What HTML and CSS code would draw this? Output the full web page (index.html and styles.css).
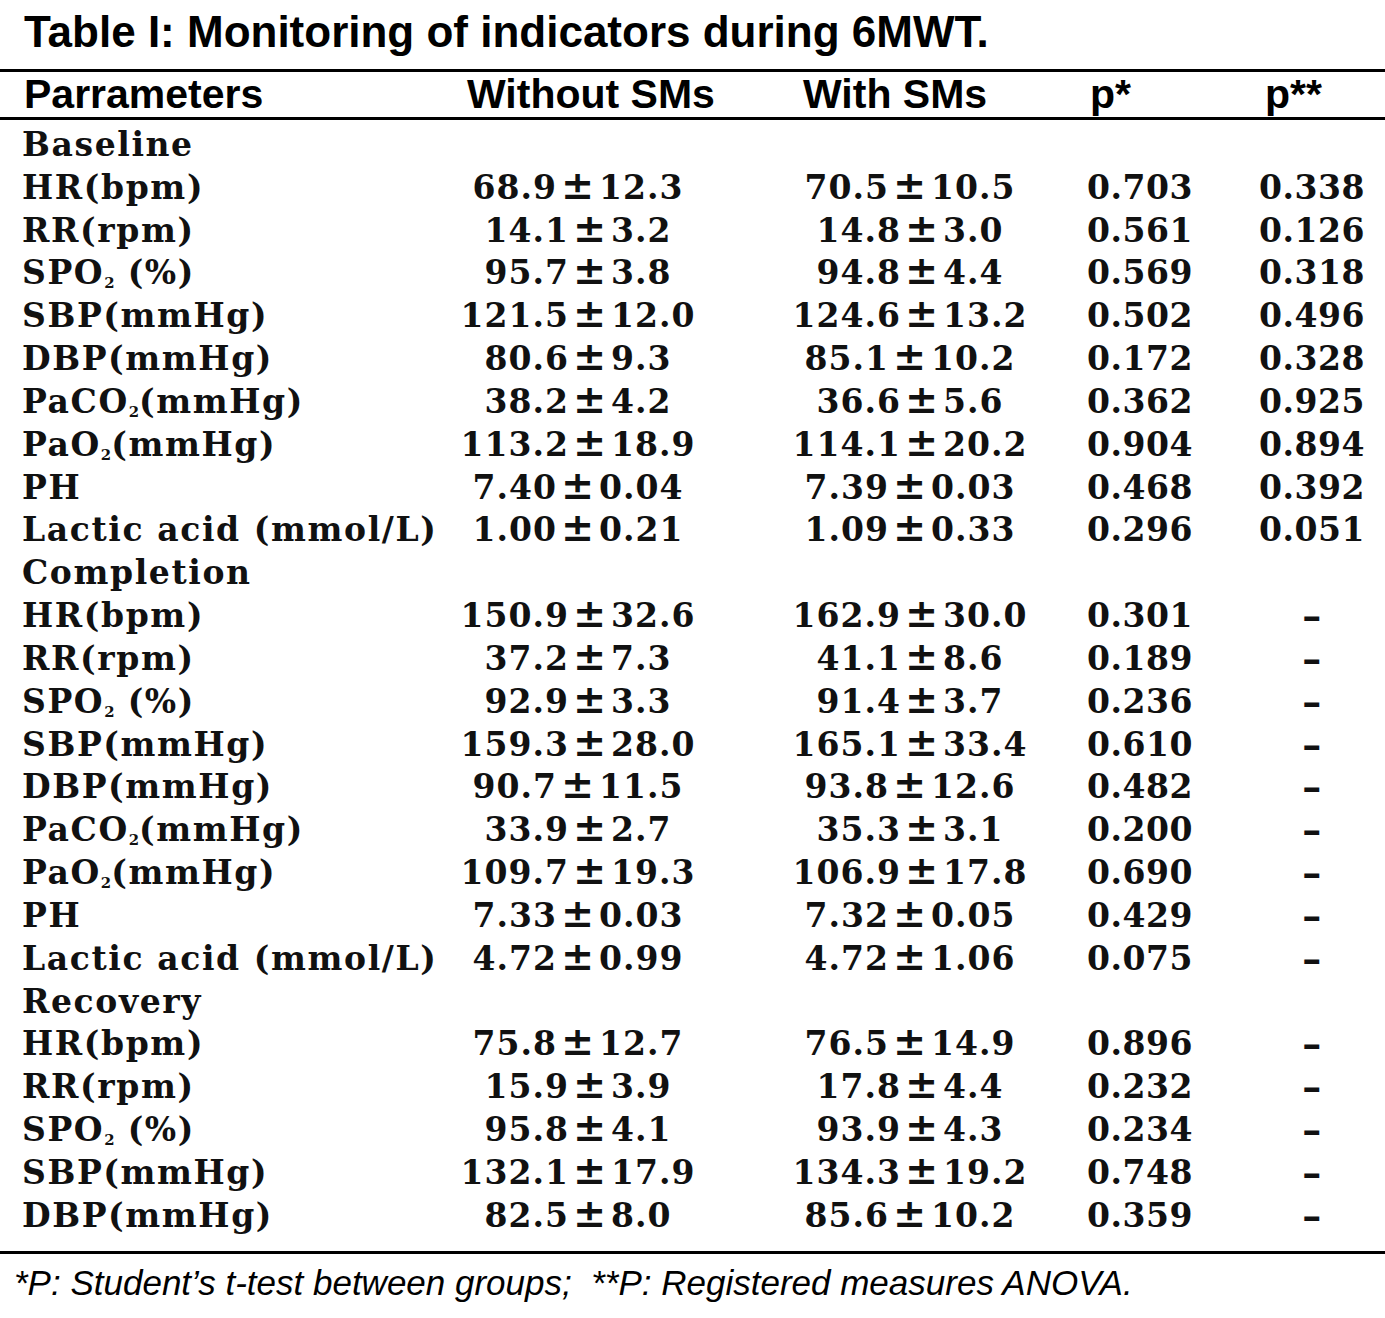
FILE: index.html
```html
<!DOCTYPE html>
<html lang="en">
<head>
<meta charset="utf-8">
<title>Table I</title>
<link rel="stylesheet" href="styles.css">
</head>
<body>
<h1 class="title">Table I: Monitoring of indicators during 6MWT.</h1>
<div class="tbl">
  <div class="row head">
    <div class="c0">Parrameters</div>
    <div class="c1">Without SMs</div>
    <div class="c2">With SMs</div>
    <div class="c3">p*</div>
    <div class="c4">p**</div>
  </div>
  <div class="body">
    <div class="row"><div class="c0">Baseline</div></div>
    <div class="row"><div class="c0">HR(bpm)</div><div class="c1">68.9<span class="pm">±</span>12.3</div><div class="c2">70.5<span class="pm">±</span>10.5</div><div class="c3">0.703</div><div class="c4">0.338</div></div>
    <div class="row"><div class="c0">RR(rpm)</div><div class="c1">14.1<span class="pm">±</span>3.2</div><div class="c2">14.8<span class="pm">±</span>3.0</div><div class="c3">0.561</div><div class="c4">0.126</div></div>
    <div class="row"><div class="c0">SPO<sub>2</sub> (%)</div><div class="c1">95.7<span class="pm">±</span>3.8</div><div class="c2">94.8<span class="pm">±</span>4.4</div><div class="c3">0.569</div><div class="c4">0.318</div></div>
    <div class="row"><div class="c0">SBP(mmHg)</div><div class="c1">121.5<span class="pm">±</span>12.0</div><div class="c2">124.6<span class="pm">±</span>13.2</div><div class="c3">0.502</div><div class="c4">0.496</div></div>
    <div class="row"><div class="c0">DBP(mmHg)</div><div class="c1">80.6<span class="pm">±</span>9.3</div><div class="c2">85.1<span class="pm">±</span>10.2</div><div class="c3">0.172</div><div class="c4">0.328</div></div>
    <div class="row"><div class="c0">PaCO<sub>2</sub>(mmHg)</div><div class="c1">38.2<span class="pm">±</span>4.2</div><div class="c2">36.6<span class="pm">±</span>5.6</div><div class="c3">0.362</div><div class="c4">0.925</div></div>
    <div class="row"><div class="c0">PaO<sub>2</sub>(mmHg)</div><div class="c1">113.2<span class="pm">±</span>18.9</div><div class="c2">114.1<span class="pm">±</span>20.2</div><div class="c3">0.904</div><div class="c4">0.894</div></div>
    <div class="row"><div class="c0">PH</div><div class="c1">7.40<span class="pm">±</span>0.04</div><div class="c2">7.39<span class="pm">±</span>0.03</div><div class="c3">0.468</div><div class="c4">0.392</div></div>
    <div class="row"><div class="c0">Lactic acid (mmol/L)</div><div class="c1">1.00<span class="pm">±</span>0.21</div><div class="c2">1.09<span class="pm">±</span>0.33</div><div class="c3">0.296</div><div class="c4">0.051</div></div>
    <div class="row"><div class="c0">Completion</div></div>
    <div class="row"><div class="c0">HR(bpm)</div><div class="c1">150.9<span class="pm">±</span>32.6</div><div class="c2">162.9<span class="pm">±</span>30.0</div><div class="c3">0.301</div><div class="c4 dash">–</div></div>
    <div class="row"><div class="c0">RR(rpm)</div><div class="c1">37.2<span class="pm">±</span>7.3</div><div class="c2">41.1<span class="pm">±</span>8.6</div><div class="c3">0.189</div><div class="c4 dash">–</div></div>
    <div class="row"><div class="c0">SPO<sub>2</sub> (%)</div><div class="c1">92.9<span class="pm">±</span>3.3</div><div class="c2">91.4<span class="pm">±</span>3.7</div><div class="c3">0.236</div><div class="c4 dash">–</div></div>
    <div class="row"><div class="c0">SBP(mmHg)</div><div class="c1">159.3<span class="pm">±</span>28.0</div><div class="c2">165.1<span class="pm">±</span>33.4</div><div class="c3">0.610</div><div class="c4 dash">–</div></div>
    <div class="row"><div class="c0">DBP(mmHg)</div><div class="c1">90.7<span class="pm">±</span>11.5</div><div class="c2">93.8<span class="pm">±</span>12.6</div><div class="c3">0.482</div><div class="c4 dash">–</div></div>
    <div class="row"><div class="c0">PaCO<sub>2</sub>(mmHg)</div><div class="c1">33.9<span class="pm">±</span>2.7</div><div class="c2">35.3<span class="pm">±</span>3.1</div><div class="c3">0.200</div><div class="c4 dash">–</div></div>
    <div class="row"><div class="c0">PaO<sub>2</sub>(mmHg)</div><div class="c1">109.7<span class="pm">±</span>19.3</div><div class="c2">106.9<span class="pm">±</span>17.8</div><div class="c3">0.690</div><div class="c4 dash">–</div></div>
    <div class="row"><div class="c0">PH</div><div class="c1">7.33<span class="pm">±</span>0.03</div><div class="c2">7.32<span class="pm">±</span>0.05</div><div class="c3">0.429</div><div class="c4 dash">–</div></div>
    <div class="row"><div class="c0">Lactic acid (mmol/L)</div><div class="c1">4.72<span class="pm">±</span>0.99</div><div class="c2">4.72<span class="pm">±</span>1.06</div><div class="c3">0.075</div><div class="c4 dash">–</div></div>
    <div class="row"><div class="c0">Recovery</div></div>
    <div class="row"><div class="c0">HR(bpm)</div><div class="c1">75.8<span class="pm">±</span>12.7</div><div class="c2">76.5<span class="pm">±</span>14.9</div><div class="c3">0.896</div><div class="c4 dash">–</div></div>
    <div class="row"><div class="c0">RR(rpm)</div><div class="c1">15.9<span class="pm">±</span>3.9</div><div class="c2">17.8<span class="pm">±</span>4.4</div><div class="c3">0.232</div><div class="c4 dash">–</div></div>
    <div class="row"><div class="c0">SPO<sub>2</sub> (%)</div><div class="c1">95.8<span class="pm">±</span>4.1</div><div class="c2">93.9<span class="pm">±</span>4.3</div><div class="c3">0.234</div><div class="c4 dash">–</div></div>
    <div class="row"><div class="c0">SBP(mmHg)</div><div class="c1">132.1<span class="pm">±</span>17.9</div><div class="c2">134.3<span class="pm">±</span>19.2</div><div class="c3">0.748</div><div class="c4 dash">–</div></div>
    <div class="row"><div class="c0">DBP(mmHg)</div><div class="c1">82.5<span class="pm">±</span>8.0</div><div class="c2">85.6<span class="pm">±</span>10.2</div><div class="c3">0.359</div><div class="c4 dash">–</div></div>
  </div>
</div>
<p class="note">*P: Student’s t-test between groups;&nbsp; **P: Registered measures ANOVA.</p>
</body>
</html>
```
FILE: styles.css
```css
html, body {
  margin: 0;
  padding: 0;
  background: #fff;
  color: #000;
}

body {
  width: 1385px;
}

.title {
  margin: 0;
  padding: 7px 0 0 24px;
  font-family: "Liberation Sans", Arial, sans-serif;
  font-weight: bold;
  font-size: 44px;
  line-height: 50px;
  color: #000;
}

.tbl {
  margin-top: 12px;
  border-top: 3px solid #000;
  border-bottom: 3px solid #000;
}

.row {
  display: grid;
  grid-template-columns: 438px 280px 320px 202px 145px;
  height: 42.84px;
  align-items: center;
}

.head {
  height: 45px;
  border-bottom: 3px solid #000;
  font-family: "Liberation Sans", Arial, sans-serif;
  font-weight: bold;
  font-size: 41px;
  line-height: 45px;
  text-align: left;
}

.head .c0 { padding-left: 24px; }
.head .c1 { padding-left: 29px; }
.head .c2 { padding-left: 85px; }
.head .c3 { padding-left: 52px; }
.head .c4 { padding-left: 25px; }

.body {
  padding: 3.6px 0 14px;
  font-family: "DejaVu Serif", serif;
  font-weight: bold;
  font-size: 33px;
  line-height: 42px;
  color: #111;
}

.body .c0 {
  padding-left: 22px;
  white-space: nowrap;
  letter-spacing: 1.6px;
}

.body .c1,
.body .c2,
.body .c3,
.body .c4 {
  text-align: center;
  white-space: nowrap;
  letter-spacing: 0.5px;
}

.body .c1,
.body .c2 {
  letter-spacing: 1px;
}

.body .c2 { padding-left: 64px; }
.body .c3 { padding-left: 2px; }
.body .c4 { padding-left: 2px; padding-right: 3px; }

.body .dash {
  font-size: 38px;
  line-height: 30px;
}

.pm {
  margin: 0 5px 0 4px;
  font-size: 1.2em;
  line-height: 30px;
  letter-spacing: 0;
}

sub {
  font-size: 0.45em;
  vertical-align: -0.25em;
  line-height: 0;
  letter-spacing: 0;
}

.note {
  margin: 9px 0 0;
  padding-left: 14px;
  font-family: "Liberation Sans", Arial, sans-serif;
  font-style: italic;
  font-size: 35px;
  line-height: 40px;
}
```
